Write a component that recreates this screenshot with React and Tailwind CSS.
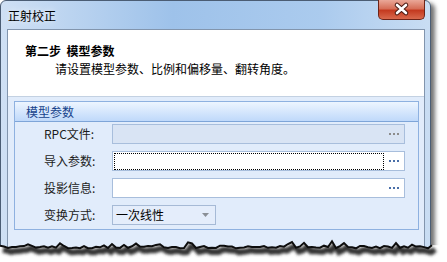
import React from 'react'

const jag = (() => {
  let s = 11
  const r = () => {
    s = (s * 16807) % 2147483647
    return s / 2147483647
  }
  const pts = []
  for (let x = 0; x <= 432; x += 4) {
    let y = 11 + (r() - 0.5) * 2.6
    if (r() > 0.82) y -= 2 + r() * 2.5
    pts.push([x, +y.toFixed(1)])
  }
  return pts
})()

const jagLine = jag.map(([x, y]) => `${x},${y}`).join(' ')
const below = `M0,${jag[0][1]} ` + jag.map(([x, y]) => `L${x},${y}`).join(' ') + ` L447,${jag[jag.length - 1][1]} L447,30 L0,30 Z`

const TornEdge = () => (
  <svg className="absolute left-0 top-[236px]" width="447" height="26" viewBox="0 0 447 26">
    <defs>
      <clipPath id="under">
        <path d={below} />
      </clipPath>
      <filter id="blur" x="-5%" y="-100%" width="110%" height="300%">
        <feGaussianBlur stdDeviation="1.8" />
      </filter>
    </defs>
    <path d={below} fill="#ffffff" />
    <g clipPath="url(#under)">
      <polyline points={jagLine} transform="translate(3,4)" fill="none" stroke="#333" strokeWidth="6" filter="url(#blur)" />
    </g>
    <polyline points={jagLine} fill="none" stroke="#0d0d0d" strokeWidth="2" />
  </svg>
)

const Dots = ({ on }) => (
  <span className="flex gap-[2px]">
    <i className={on ? 'h-[2px] w-[2px] bg-[#4a6fa8]' : 'h-[2px] w-[2px] bg-[#8c8c8c]'} />
    <i className={on ? 'h-[2px] w-[2px] bg-[#4a6fa8]' : 'h-[2px] w-[2px] bg-[#8c8c8c]'} />
    <i className={on ? 'h-[2px] w-[2px] bg-[#4a6fa8]' : 'h-[2px] w-[2px] bg-[#8c8c8c]'} />
  </span>
)

const Row = ({ label, children }) => (
  <div className="flex h-[20px] items-center">
    <span className="w-[68px] shrink-0 text-[#1c1c1c]">{label}</span>
    {children}
  </div>
)

export default function App() {
  return (
    <div className="relative h-[262px] w-[447px] overflow-hidden bg-white font-['Noto_Sans_CJK_SC',sans-serif] text-[12px] leading-[16px] text-black">
      <div className="flex h-[262px] w-[431px] flex-col rounded-t-[6px] border border-[#4b5d74] bg-[linear-gradient(90deg,#cfe0f4,#9ec2ea_40%,#abcbee_75%,#c9ddf3)] pl-[6px] pr-[5px] shadow-[4px_3px_4px_rgba(0,0,0,0.55)]">
        <div className="flex h-[28px] items-start">
          <span className="pl-[1px] pt-[7px] [text-shadow:0_0_6px_white]">正射校正</span>
          <button className="ml-auto mt-[-1px] h-[20px] w-[47px] rounded-b-[5px] border border-t-0 border-[#6e2418] bg-[linear-gradient(#eaa898,#d66f58_45%,#c43a20_55%,#d9694d)]">
            <svg width="45" height="19" viewBox="0 0 45 19">
              <path d="M18 5 L27 13 M27 5 L18 13" stroke="#4a1a12" strokeWidth="4.6" strokeLinecap="round" />
              <path d="M18 5 L27 13 M27 5 L18 13" stroke="#ffffff" strokeWidth="2.6" strokeLinecap="round" />
            </svg>
          </button>
        </div>

        <div className="flex flex-1 flex-col border border-[#8295ad] bg-[#e1ecfb]">
          <div className="h-[67px] border-b border-[#c3d1e2] bg-white pl-[17px] pt-[13px]">
            <div className="font-bold">第二步&nbsp;&nbsp;模型参数</div>
            <div className="mt-[2px] pl-[30px]">请设置模型参数、比例和偏移量、翻转角度。</div>
          </div>

          <div className="ml-[6px] mr-[5px] mt-[4px] border border-[#8eb1e0] pb-[4px]">
            <div className="h-[20px] border-b border-[#7ea5d8] bg-[linear-gradient(#edf5ff,#bfd9fa)] pl-[11px] pt-[2px] text-[#15428b]">
              模型参数
            </div>
            <div className="mt-[2px] flex flex-col gap-[7px] pl-[29px]">
              <Row label="RPC文件:">
                <div className="flex h-[20px] w-[293px] items-center justify-end border border-[#a8bedc] bg-[#d9e4f4] pr-[5px]">
                  <Dots on={false} />
                </div>
              </Row>
              <Row label="导入参数:">
                <div className="flex h-[20px] w-[293px] items-center border border-[#a8bedc] bg-white pr-[5px]">
                  <div className="ml-[1px] h-[17px] w-[270px] border border-dotted border-black" />
                  <span className="ml-auto"><Dots on /></span>
                </div>
              </Row>
              <Row label="投影信息:">
                <div className="flex h-[20px] w-[293px] items-center justify-end border border-[#a8bedc] bg-white pr-[5px]">
                  <Dots on />
                </div>
              </Row>
              <Row label="变换方式:">
                <div className="flex h-[20px] w-[104px] items-center border border-[#a6bad6] bg-[#e4edfb] pl-[3px] pr-[6px]">
                  <span>一次线性</span>
                  <svg className="ml-auto" width="7" height="4" viewBox="0 0 7 4">
                    <path d="M0 0 H7 L3.5 4 Z" fill="#8a8f96" />
                  </svg>
                </div>
              </Row>
            </div>
          </div>
        </div>
      </div>
      <TornEdge />
    </div>
  )
}
